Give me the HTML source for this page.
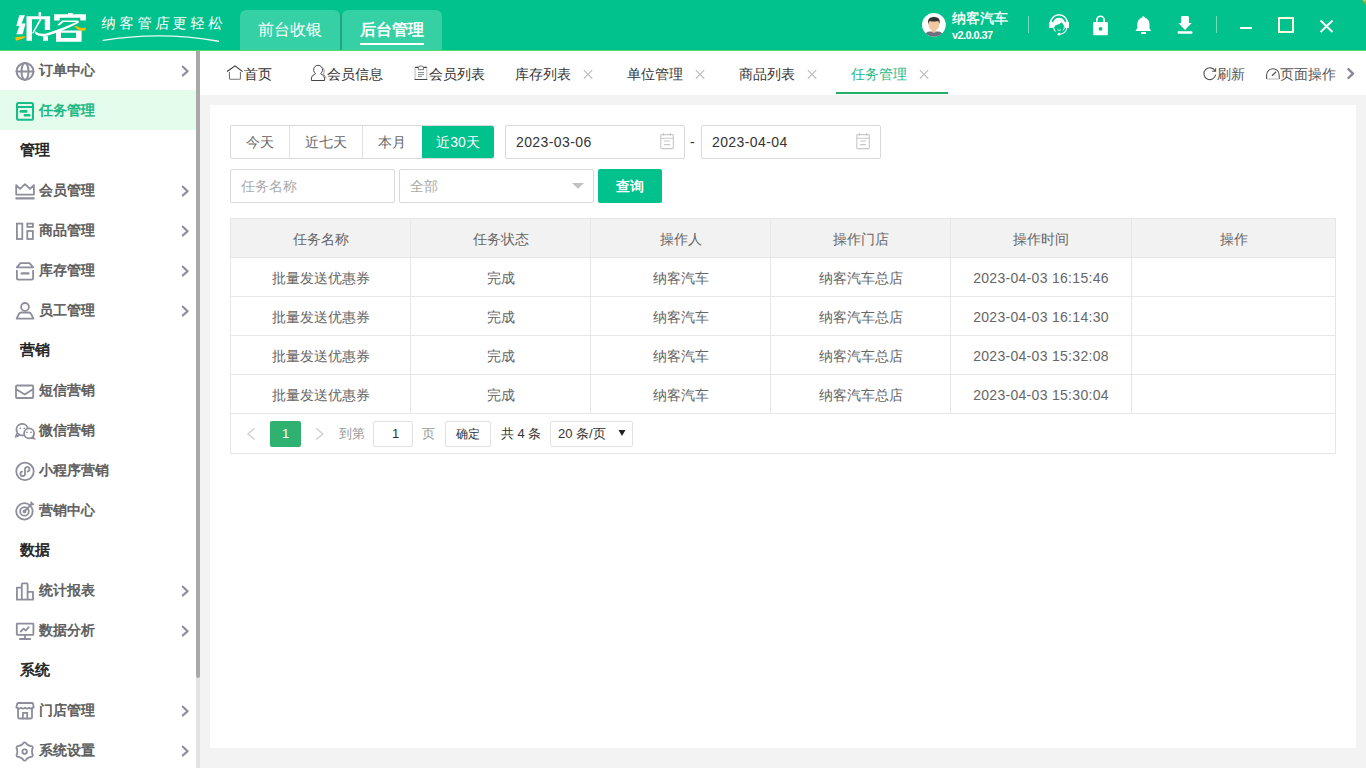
<!DOCTYPE html>
<html><head><meta charset="utf-8">
<style>
*{box-sizing:border-box;margin:0;padding:0}
html,body{width:1366px;height:768px;overflow:hidden;background:#f3f3f3;font-family:"Liberation Sans",sans-serif;color:#333}
.abs{position:absolute}
#hdr{position:absolute;left:0;top:0;width:1366px;height:50px;background:#01c18c}
#hdrline{position:absolute;left:0;top:50px;width:1366px;height:1px;background:#55dc66}
.htab{position:absolute;top:10px;height:40px;background:#35d0a4;border-radius:6px 6px 0 0;color:#fff;font-size:16px;line-height:40px;text-align:center}
#side{position:absolute;left:0;top:51px;width:196px;height:717px;background:#fff}
.si{position:absolute;left:0;width:196px;height:40px;font-size:14px;color:#5a5a5a;line-height:40px}
.si .t{-webkit-text-stroke:0.55px currentColor}
.si.sec .t{-webkit-text-stroke:0.6px currentColor}
.si .t{position:absolute;left:39px;top:0}
.si.sec .t{left:20px;color:#222;font-size:15px}
.si.act{background:#e4fcec;color:#16b782}
.si .ic{position:absolute;left:10px}
.si .chev{position:absolute;left:170px;top:5px;width:30px;height:30px}
#sb{position:absolute;left:196px;top:51px;width:4px;height:717px;background:#e3e3e3}
#sbt{position:absolute;left:196px;top:51px;width:4px;height:627px;background:#a9a9a9;border-radius:0 0 2px 2px}
#tabs{position:absolute;left:200px;top:51px;width:1166px;height:44px;background:#fff}
.tb{position:absolute;top:52px;height:44px;line-height:44px;white-space:nowrap;font-size:14px;color:#333}
.x{position:absolute;top:0;font-size:16px;color:#bbb}
.fb{position:absolute;top:125px;height:34px;line-height:34px;text-align:center;font-size:14px;color:#666}
.inp{position:absolute;border:1px solid #d9d9d9;border-radius:2px;background:#fff}
.dt{font-size:14px;line-height:35px;color:#333;letter-spacing:0.4px}
.ph{font-size:14px;line-height:34px;color:#aaa}
.cal{fill:none;stroke:#c8c8c8;stroke-width:1.1}
#tbl{position:absolute;left:230px;top:218px;width:1105px}
#tbl table{border-collapse:collapse;table-layout:fixed;width:1105px}
#tbl td{border:1px solid #e6e6e6;height:39px;text-align:center;font-size:14px;color:#666;padding:2px 0 0 0;white-space:nowrap;line-height:16px}
#tbl tr.th td{background:#f2f2f2}
.pg{top:421px;font-size:13px;line-height:26px}
#card{position:absolute;left:210px;top:105px;width:1146px;height:643px;background:#fff}
</style></head><body>
<div id="hdr"></div>
<div id="hdrline"></div>
<svg class="abs" style="left:0;top:0" width="240" height="50" viewBox="0 0 240 50">
<g fill="#fff">
<path d="M19.3 15.3H24.9L21.6 23.5H25.6L22.6 34.2H16.3L19.4 25.9H16.3Z"/>
<path d="M26.5 16.2H50.1V29.9H44.8V19.2H32V40.8H26.5Z"/>
<path d="M39.6 19.2H41.6L33.6 33.2H32Z"/>
<path d="M38.6 12.2H41.1V16.2H38.6Z"/>
<path d="M43 36.1H48V40.8H43Z"/>
<path d="M35 31.2Q40 35.2 47 33.2Q62 28.5 78.4 21.2L78.9 22.7Q63 31 48 35.6Q39 37.8 35 33.6Z"/>
<path d="M67.9 13.1H72.8V15.5H67.9Z"/>
<path d="M54.2 14.3H85.9V20.6H80.3V17.8H59.7V20.6H54.2Z"/>
<path d="M57.3 24.9L62 20.4H78.4V22H63.5L59.5 25.6Z"/>
<path d="M56 30.5H81.6V41.7H56ZM61 32.8V38.1H76V32.8Z" fill-rule="evenodd"/>
</g>
<g fill="#f6c000">
<path d="M15.3 37.3Q20 37 25.2 36.3L24.6 38Q20 39.8 15.8 40.8Z"/>
<path d="M74.1 26.2Q76.5 25.6 79.5 27.5Q83 28.6 85.9 27.2L85.5 30.2Q81 31.5 78 29.6Q76 28 74.1 26.2Z"/>
</g>
<text x="101" y="28.5" fill="#fff" font-size="14.3" font-family="Liberation Serif" letter-spacing="3.9" transform="skewX(-5) translate(2.5 0)">纳客管店更轻松</text>
<path d="M103.2 40.4Q160 31 218.5 41.2" fill="none" stroke="#fff" stroke-width="1.4" stroke-linecap="round" opacity="0.92"/>
</svg>

<div class="htab" style="left:240px;width:100px">前台收银</div>
<div class="abs" style="left:340px;top:14px;width:2px;height:36px;background:#1aa97d"></div>
<div class="htab" style="left:342px;width:100px;font-weight:bold">后台管理</div>
<div class="abs" style="left:360px;top:43px;width:64px;height:2px;background:#fff"></div>

<svg class="abs" style="left:920px;top:8px" width="40" height="34" viewBox="0 0 40 34">
<defs><clipPath id="avc"><circle cx="13.9" cy="16.8" r="11.9"/></clipPath></defs>
<circle cx="13.9" cy="16.8" r="11.9" fill="#fff"/>
<g clip-path="url(#avc)">
<path d="M3 30Q5 23.5 10 23.5H18Q23 23.5 25 30V34H3Z" fill="#6f6f82"/>
<path d="M11.8 20.5V24Q13.9 25.6 16 24V20.5Z" fill="#f2c299"/>
<ellipse cx="13.9" cy="16.2" rx="5.4" ry="6.3" fill="#f5c7a0"/>
<path d="M8 16.5Q7.2 9.5 12.2 9.2Q14 8.4 15.8 9.2Q20.6 9.5 19.8 16.5Q19.3 13.6 17.8 12.9Q14 14.3 10 12.9Q8.6 13.6 8 16.5Z" fill="#333"/>
</g></svg>
<div class="abs" style="left:952px;top:9px;font-size:14px;line-height:18px;color:#fff;white-space:nowrap;-webkit-text-stroke:0.35px #fff">纳客汽车</div>
<div class="abs" style="left:952px;top:29px;font-size:11px;line-height:13px;color:#fff;font-weight:bold;letter-spacing:-0.6px">v2.0.0.37</div>
<div class="abs" style="left:1028px;top:16px;width:1px;height:17px;background:rgba(255,255,255,0.45)"></div>
<svg class="abs" style="left:1044px;top:10px" width="30" height="30" viewBox="0 0 30 30">
<path d="M6.6 13.2A8.4 8.4 0 0 1 23.4 13.2" fill="none" stroke="#fff" stroke-width="1.5"/>
<rect x="5.1" y="11.7" width="3.9" height="6.3" rx="0.8" fill="#fff"/>
<rect x="21.1" y="11.7" width="3.9" height="6.3" rx="0.8" fill="#fff"/>
<path d="M9 14.5Q9.3 7.8 15 7.8Q20.8 7.8 21.1 14.5V17.6L20 15.8Q19.3 14 17.4 12.3Q16 14.3 13 14.8Q10.5 15.4 10.1 17.6L9 17.3Z" fill="#fff"/>
<path d="M9.6 17.2Q9.8 20 11.8 21.6" fill="none" stroke="#fff" stroke-width="1.1"/>
<path d="M20.4 16.5Q20.3 19 19 20.5" fill="none" stroke="#fff" stroke-width="1"/>
<path d="M13.4 19.9Q15.2 20.5 17 19.9" fill="none" stroke="#fff" stroke-width="0.8"/>
<path d="M22.6 18Q22 23.6 15.6 24.2" fill="none" stroke="#fff" stroke-width="1.1"/>
<circle cx="15" cy="24.2" r="1.4" fill="#fff"/>
</svg>
<svg class="abs" style="left:1088px;top:10px" width="30" height="30" viewBox="0 0 30 30">
<path d="M8.8 12.5V10A3.7 3.7 0 0 1 16.2 10V12.5" fill="none" stroke="#fff" stroke-width="1.6"/>
<rect x="5.1" y="12.1" width="14.8" height="13.1" rx="1" fill="#fff"/>
<circle cx="12.5" cy="18.8" r="1.9" fill="#01c18c"/>
</svg>
<svg class="abs" style="left:1128px;top:10px" width="30" height="30" viewBox="0 0 30 30">
<path d="M15.4 5.9Q16.4 5.9 16.7 7.6Q21.4 9 21.5 14.5V18.2L22.9 20.4Q23 21 22.3 21H8.3Q7.6 21 7.7 20.4L9.3 18.2V14.5Q9.4 9 14.1 7.6Q14.4 5.9 15.4 5.9Z" fill="#fff"/>
<rect x="13.1" y="22" width="4.9" height="1.9" rx="0.5" fill="#fff"/>
</svg>
<svg class="abs" style="left:1170px;top:10px" width="30" height="30" viewBox="0 0 30 30">
<path d="M11.1 12.9V7Q11.1 5.9 12.2 5.9H17.8Q18.9 5.9 18.9 7V12.9H21.7L15 20.1L8.4 12.9Z" fill="#fff"/>
<rect x="7.6" y="21.3" width="14.9" height="2.5" rx="1" fill="#fff"/>
</svg>
<div class="abs" style="left:1216px;top:16px;width:1px;height:17px;background:rgba(255,255,255,0.45)"></div>
<div class="abs" style="left:1240px;top:27px;width:12px;height:2px;background:#fff"></div>
<div class="abs" style="left:1278px;top:17px;width:16px;height:16px;border:2px solid #fdfde0"></div>
<svg class="abs" style="left:1318px;top:18px" width="17" height="17" viewBox="0 0 17 17"><path d="M2.6 2.5L14.5 14M14.5 2.5L2.6 14" stroke="#fff" stroke-width="1.9"/></svg>

<div id="side"></div>
<div class="si" style="top:50px"><svg class="ic" style="top:5px" width="30" height="30" viewBox="0 0 30 30" fill="none" stroke="#8d8d9b" stroke-width="2" stroke-linecap="round"><circle cx="15" cy="16.4" r="8.4"/><ellipse cx="15" cy="16.4" rx="3.5" ry="8.5"/><path d="M6.5 16.4H23.5"/></svg><span class="t">订单中心</span><svg class="chev" width="30" height="30" viewBox="0 0 30 30"><path d="M12.9 11.7L17.6 16.2L12.9 20.4" fill="none" stroke="#8d8d9b" stroke-width="2.2" stroke-linecap="round" stroke-linejoin="round"/></svg></div>
<div class="si act" style="top:90px"><svg class="ic" style="top:5px" width="30" height="30" viewBox="0 0 30 30" fill="none" stroke="#15bd88" stroke-width="2" stroke-linecap="round"><rect x="7" y="8" width="16" height="16.8" rx="1.6"/><path d="M6.9 11.9H23.1"/><path d="M10.8 16.4H16.3M14.9 20.3H19.3" stroke-width="2.6"/></svg><span class="t">任务管理</span></div>
<div class="si sec" style="top:130px"><span class="t">管理</span></div>
<div class="si" style="top:170px"><svg class="ic" style="top:8px" width="30" height="30" viewBox="0 0 30 30" fill="none" stroke="#8d8d9b" stroke-width="1.8" stroke-linecap="round"><path d="M6.2 16.6V7.1L10 10.9L15 6.2L20 10.9L23.9 7.1V16.6Z" stroke-linejoin="round"/><path d="M6.3 20.3H23.8" stroke-width="2.2"/></svg><span class="t">会员管理</span><svg class="chev" width="30" height="30" viewBox="0 0 30 30"><path d="M12.9 11.7L17.6 16.2L12.9 20.4" fill="none" stroke="#8d8d9b" stroke-width="2.2" stroke-linecap="round" stroke-linejoin="round"/></svg></div>
<div class="si" style="top:210px"><svg class="ic" style="top:8px" width="30" height="30" viewBox="0 0 30 30" fill="none" stroke="#8d8d9b" stroke-width="1.8" stroke-linecap="round"><rect x="6.9" y="5.6" width="5.4" height="15.4"/><rect x="17.3" y="5.6" width="5.6" height="3.3"/><rect x="17.3" y="13" width="5.6" height="8"/></svg><span class="t">商品管理</span><svg class="chev" width="30" height="30" viewBox="0 0 30 30"><path d="M12.9 11.7L17.6 16.2L12.9 20.4" fill="none" stroke="#8d8d9b" stroke-width="2.2" stroke-linecap="round" stroke-linejoin="round"/></svg></div>
<div class="si" style="top:250px"><svg class="ic" style="top:8px" width="30" height="30" viewBox="0 0 30 30" fill="none" stroke="#8d8d9b" stroke-width="1.8" stroke-linecap="round"><path d="M6.8 9.3L10.4 5.2H19.5L23.2 9.3Z" stroke-linejoin="round"/><path d="M6.9 12.6V20Q6.9 21.6 8.5 21.6H21.5Q23.1 21.6 23.1 20V12.6"/><path d="M11.8 15.4H18.3" stroke-width="2.4"/></svg><span class="t">库存管理</span><svg class="chev" width="30" height="30" viewBox="0 0 30 30"><path d="M12.9 11.7L17.6 16.2L12.9 20.4" fill="none" stroke="#8d8d9b" stroke-width="2.2" stroke-linecap="round" stroke-linejoin="round"/></svg></div>
<div class="si" style="top:290px"><svg class="ic" style="top:8px" width="30" height="30" viewBox="0 0 30 30" fill="none" stroke="#8d8d9b" stroke-width="1.8" stroke-linecap="round"><circle cx="15" cy="8.9" r="3.9"/><path d="M6.6 20.6L8.8 16.1Q9.6 14.5 11.4 14.5H18.6Q20.4 14.5 21.2 16.1L23.4 20.6Z" stroke-linejoin="round"/></svg><span class="t">员工管理</span><svg class="chev" width="30" height="30" viewBox="0 0 30 30"><path d="M12.9 11.7L17.6 16.2L12.9 20.4" fill="none" stroke="#8d8d9b" stroke-width="2.2" stroke-linecap="round" stroke-linejoin="round"/></svg></div>
<div class="si sec" style="top:330px"><span class="t">营销</span></div>
<div class="si" style="top:370px"><svg class="ic" style="top:5px" width="30" height="30" viewBox="0 0 30 30" fill="none" stroke="#8d8d9b" stroke-width="1.8" stroke-linecap="round"><rect x="6" y="10.5" width="17.2" height="12.5" rx="1"/><path d="M6.3 14.3L14.7 19.4L23 14.3" stroke-linejoin="round"/></svg><span class="t">短信营销</span></div>
<div class="si" style="top:410px"><svg class="ic" style="top:5px" width="30" height="30" viewBox="0 0 30 30" fill="none" stroke="#8d8d9b" stroke-width="1.8" stroke-linecap="round"><path d="M13.2 20.3A5.7 5.7 0 1 1 17.6 12.8"/><path d="M6.6 19.2L6 21.5L8.6 20.6"/><circle cx="19.1" cy="18.4" r="5"/><path d="M22.8 21.8L24 23.6L21.8 23.2"/><path d="M10.2 13.3h0.3M14.1 13.3h0.3M16.8 17.2h0.4M20.7 17.2h0.4" stroke-width="1.6" stroke-linecap="round"/></svg><span class="t">微信营销</span></div>
<div class="si" style="top:450px"><svg class="ic" style="top:5px" width="30" height="30" viewBox="0 0 30 30" fill="none" stroke="#8d8d9b" stroke-width="1.8" stroke-linecap="round"><circle cx="15" cy="16.4" r="8.7"/><path d="M12.1 16.6A2.3 2.3 0 1 0 15 18.6V14.9A2.3 2.3 0 1 1 17.7 16.5"/></svg><span class="t">小程序营销</span></div>
<div class="si" style="top:490px"><svg class="ic" style="top:5px" width="30" height="30" viewBox="0 0 30 30" fill="none" stroke="#8d8d9b" stroke-width="1.8" stroke-linecap="round"><circle cx="14.45" cy="16.4" r="8.2"/><circle cx="14.45" cy="16.4" r="4.3"/><path d="M14.3 16.5L21.6 9"/><circle cx="14.45" cy="16.4" r="1"/><path d="M21.4 7.6V9.3H23.1" stroke-width="2"/></svg><span class="t">营销中心</span></div>
<div class="si sec" style="top:530px"><span class="t">数据</span></div>
<div class="si" style="top:570px"><svg class="ic" style="top:5px" width="30" height="30" viewBox="0 0 30 30" fill="none" stroke="#8d8d9b" stroke-width="1.8" stroke-linecap="round"><path d="M6.9 24.7V12.6H11.8V24.7ZM11.8 12V9.1Q11.8 8.3 12.6 8.3H16.8Q17.6 8.3 17.6 9.1V24.7M17.6 16.9H23V24.7H11.8" stroke-linejoin="round"/></svg><span class="t">统计报表</span><svg class="chev" width="30" height="30" viewBox="0 0 30 30"><path d="M12.9 11.7L17.6 16.2L12.9 20.4" fill="none" stroke="#8d8d9b" stroke-width="2.2" stroke-linecap="round" stroke-linejoin="round"/></svg></div>
<div class="si" style="top:610px"><svg class="ic" style="top:5px" width="30" height="30" viewBox="0 0 30 30" fill="none" stroke="#8d8d9b" stroke-width="1.8" stroke-linecap="round"><rect x="6.8" y="8.7" width="16.6" height="11.1" rx="0.5"/><path d="M15 19.8V23.6M9.9 24H20.2"/><path d="M10.8 16.5L13.7 13.6L15.8 15.5L18.7 12.1" stroke-linejoin="round"/></svg><span class="t">数据分析</span><svg class="chev" width="30" height="30" viewBox="0 0 30 30"><path d="M12.9 11.7L17.6 16.2L12.9 20.4" fill="none" stroke="#8d8d9b" stroke-width="2.2" stroke-linecap="round" stroke-linejoin="round"/></svg></div>
<div class="si sec" style="top:650px"><span class="t">系统</span></div>
<div class="si" style="top:690px"><svg class="ic" style="top:5px" width="30" height="30" viewBox="0 0 30 30" fill="none" stroke="#8d8d9b" stroke-width="1.8" stroke-linecap="round"><path d="M7.3 8.5Q7.5 8 8.5 8H22Q22.8 8 23 8.6L23.7 12.3Q23.4 13 22.5 12.6Q21 14.6 19 12.6Q17.1 14.6 15 12.6Q13 14.6 11 12.6Q9 14.6 7.4 12.6Q6.3 13 6.4 12.2Z" stroke-linejoin="round"/><path d="M8.1 13.5V22.6Q8.1 23.5 9 23.5H21.1Q22 23.5 22 22.6V13.5"/><path d="M12.9 23.5V17.8H17.2V23.5"/></svg><span class="t">门店管理</span><svg class="chev" width="30" height="30" viewBox="0 0 30 30"><path d="M12.9 11.7L17.6 16.2L12.9 20.4" fill="none" stroke="#8d8d9b" stroke-width="2.2" stroke-linecap="round" stroke-linejoin="round"/></svg></div>
<div class="si" style="top:730px"><svg class="ic" style="top:5px" width="30" height="30" viewBox="0 0 30 30" fill="none" stroke="#8d8d9b" stroke-width="1.8" stroke-linecap="round"><path d="M12.99 8.67A1.7 1.7 0 0 1 16.31 8.67L18.30 10.18L20.60 11.15A1.7 1.7 0 0 1 22.26 14.03L21.95 16.50L22.26 18.97A1.7 1.7 0 0 1 20.60 21.85L18.30 22.82L16.31 24.33A1.7 1.7 0 0 1 12.99 24.33L11.00 22.82L8.70 21.85A1.7 1.7 0 0 1 7.04 18.97L7.35 16.50L7.04 14.03A1.7 1.7 0 0 1 8.70 11.15L11.00 10.18Z" stroke-linejoin="round"/><circle cx="14.65" cy="16.6" r="2.3"/></svg><span class="t">系统设置</span><svg class="chev" width="30" height="30" viewBox="0 0 30 30"><path d="M12.9 11.7L17.6 16.2L12.9 20.4" fill="none" stroke="#8d8d9b" stroke-width="2.2" stroke-linecap="round" stroke-linejoin="round"/></svg></div>
<div id="sb"></div><div id="sbt"></div>
<div id="tabs"></div>
<svg class="abs" style="left:222px;top:58px" width="26" height="26" viewBox="0 0 26 26" fill="none" stroke-width="1.1">
<path d="M5.1 13.5L13 7.9L20.6 13.6" stroke="#333"/>
<path d="M7.45 13.9V20.3Q7.45 21.3 8.45 21.3H17.45Q18.45 21.3 18.45 20.3V13.9" stroke="#777"/>
</svg>
<div class="tb" style="left:244px">首页</div>
<svg class="abs" style="left:306px;top:58px" width="26" height="26" viewBox="0 0 26 26" fill="none" stroke="#555" stroke-width="1">
<path d="M9.65 15.6A4.5 4.5 0 1 1 14.55 15.6Q18.6 17.6 18.6 20V22.5H5.4V20Q5.4 17.6 9.65 15.6Z" stroke="#444"/>
<path d="M15.5 9.2A4.3 4.3 0 0 1 17.4 15.9L20.3 20.3" stroke="#999"/>
</svg>
<div class="tb" style="left:327px">会员信息</div>
<svg class="abs" style="left:408px;top:58px" width="26" height="26" viewBox="0 0 26 26" fill="none" stroke-width="1">
<path d="M7.1 9.3V21.5M18.8 9.3V21.5" stroke="#bbb"/>
<path d="M7.1 9.3H10.6M15.3 9.3H18.8M6.6 21.5H19.3" stroke="#444" stroke-width="1.2"/>
<path d="M10.6 9.3L10.2 11.7H15.7L15.3 9.3L14.6 8.1H11.3Z" stroke="#666" stroke-width="0.9"/>
<path d="M10 14.55H16.1M10 16.6H16.1M10 18.45H13.9" stroke="#888"/>
</svg>
<div class="tb" style="left:429px">会员列表</div>
<div class="tb" style="left:515px">库存列表</div>
<div class="tb" style="left:627px">单位管理</div>
<div class="tb" style="left:739px">商品列表</div>
<div class="tb" style="left:851px;color:#1fb886">任务管理</div>
<svg class="abs" style="left:575px;top:60px" width="26" height="26" viewBox="0 0 26 26"><path d="M8.8 10.15L17.3 18.45M17.3 10.15L8.8 18.45" stroke="#bdbdbd" stroke-width="1.2"/></svg>
<svg class="abs" style="left:687px;top:60px" width="26" height="26" viewBox="0 0 26 26"><path d="M8.8 10.15L17.3 18.45M17.3 10.15L8.8 18.45" stroke="#bdbdbd" stroke-width="1.2"/></svg>
<svg class="abs" style="left:799px;top:60px" width="26" height="26" viewBox="0 0 26 26"><path d="M8.8 10.15L17.3 18.45M17.3 10.15L8.8 18.45" stroke="#bdbdbd" stroke-width="1.2"/></svg>
<svg class="abs" style="left:911px;top:60px" width="26" height="26" viewBox="0 0 26 26"><path d="M8.8 10.15L17.3 18.45M17.3 10.15L8.8 18.45" stroke="#bdbdbd" stroke-width="1.2"/></svg>
<div class="abs" style="left:836px;top:92px;width:112px;height:2px;background:#22b066"></div>
<svg class="abs" style="left:1198px;top:60px" width="26" height="26" viewBox="0 0 26 26" fill="none" stroke="#555" stroke-width="1.1">
<path d="M17.2 11.2A5.9 5.9 0 1 0 17.7 14.5"/>
<path d="M17.6 8.2V11.3H14.2"/>
</svg>
<div class="tb" style="left:1217px;color:#555">刷新</div>
<svg class="abs" style="left:1260px;top:60px" width="26" height="26" viewBox="0 0 26 26" fill="none" stroke-width="1.1">
<path d="M6.6 19V15A6.3 6.3 0 0 1 19.2 15V19" stroke="#555"/>
<path d="M7 19H18.8" stroke="#c8c8c8" stroke-width="1.3"/>
<path d="M12.3 15.4L15.7 12.3" stroke="#555" stroke-width="1.3" stroke-linecap="round"/>
</svg>
<div class="tb" style="left:1280px;color:#555">页面操作</div>
<svg class="abs" style="left:1340px;top:60px" width="20" height="26" viewBox="0 0 20 26"><path d="M8.4 9.2L13 13.6L8.4 18" fill="none" stroke="#85859a" stroke-width="2.3" stroke-linecap="round" stroke-linejoin="round"/></svg>

<div id="card"></div>
<div class="abs" style="left:230px;top:125px;width:264px;height:34px;border:1px solid #d9d9d9;border-radius:2px;background:#fff"></div>
<div class="abs" style="left:289px;top:126px;width:1px;height:32px;background:#e2e2e2"></div>
<div class="abs" style="left:362px;top:126px;width:1px;height:32px;background:#e2e2e2"></div>
<div class="abs" style="left:422px;top:126px;width:72px;height:32px;background:#01c18c;border-radius:0 2px 2px 0"></div>
<div class="fb" style="left:230px;width:60px">今天</div>
<div class="fb" style="left:290px;width:72px">近七天</div>
<div class="fb" style="left:362px;width:60px">本月</div>
<div class="fb" style="left:422px;width:72px;color:#fff">近30天</div>

<div class="inp" style="left:505px;top:125px;width:180px;height:34px"></div>
<div class="abs dt" style="left:516px;top:125px">2023-03-06</div>
<div class="abs" style="left:690px;top:125px;line-height:34px;font-size:14px;color:#333">-</div>
<div class="inp" style="left:701px;top:125px;width:180px;height:34px"></div>
<div class="abs dt" style="left:712px;top:125px">2023-04-04</div>
<svg class="abs cal" style="left:650px;top:125px" width="30" height="35" viewBox="0 0 30 35"><rect x="10.8" y="9.6" width="12.5" height="14" rx="0.8"/><path d="M10.8 13.2H23.3M13.5 8V10.5M20.5 8V10.5M14 16H20M14 19.6H20"/></svg>
<svg class="abs cal" style="left:846px;top:125px" width="30" height="35" viewBox="0 0 30 35"><rect x="10.8" y="9.6" width="12.5" height="14" rx="0.8"/><path d="M10.8 13.2H23.3M13.5 8V10.5M20.5 8V10.5M14 16H20M14 19.6H20"/></svg>

<div class="inp" style="left:230px;top:169px;width:165px;height:34px"></div>
<div class="abs ph" style="left:241px;top:169px">任务名称</div>
<div class="inp" style="left:399px;top:169px;width:195px;height:34px"></div>
<div class="abs ph" style="left:410px;top:169px">全部</div>
<svg class="abs" style="left:570px;top:180px" width="16" height="10" viewBox="0 0 16 10"><path d="M2 3H14L8 8.7Z" fill="#c2c2c2"/></svg>
<div class="abs" style="left:598px;top:169px;width:64px;height:34px;background:#01c18c;border-radius:2px;color:#fff;font-size:14px;font-weight:bold;line-height:34px;text-align:center">查询</div>

<div id="tbl">
<table>
<colgroup><col style="width:180px"><col style="width:180px"><col style="width:180px"><col style="width:180px"><col style="width:181px"><col style="width:204px"></colgroup>
<tr class="th"><td>任务名称</td><td>任务状态</td><td>操作人</td><td>操作门店</td><td>操作时间</td><td>操作</td></tr>
<tr><td>批量发送优惠券</td><td>完成</td><td>纳客汽车</td><td>纳客汽车总店</td><td style="letter-spacing:0.3px">2023-04-03 16:15:46</td><td></td></tr>
<tr><td>批量发送优惠券</td><td>完成</td><td>纳客汽车</td><td>纳客汽车总店</td><td style="letter-spacing:0.3px">2023-04-03 16:14:30</td><td></td></tr>
<tr><td>批量发送优惠券</td><td>完成</td><td>纳客汽车</td><td>纳客汽车总店</td><td style="letter-spacing:0.3px">2023-04-03 15:32:08</td><td></td></tr>
<tr><td>批量发送优惠券</td><td>完成</td><td>纳客汽车</td><td>纳客汽车总店</td><td style="letter-spacing:0.3px">2023-04-03 15:30:04</td><td></td></tr>
</table>
</div>
<div class="abs" style="left:230px;top:413px;width:1106px;height:41px;border:1px solid #e6e6e6;border-top:none"></div>
<svg class="abs" style="left:240px;top:420px" width="22" height="26" viewBox="0 0 22 26"><path d="M14.6 8.3L7.9 14L14.6 19.6" fill="none" stroke="#cfcfcf" stroke-width="1.3"/></svg>
<div class="abs" style="left:270px;top:421px;width:31px;height:26px;background:#2fb26f;border-radius:2px;color:#fff;font-size:13px;line-height:26px;text-align:center">1</div>
<svg class="abs" style="left:308px;top:420px" width="22" height="26" viewBox="0 0 22 26"><path d="M8.2 8.3L14.9 14L8.2 19.6" fill="none" stroke="#cfcfcf" stroke-width="1.3"/></svg>
<div class="abs pg" style="left:339px;color:#999">到第</div>
<div class="abs" style="left:373px;top:421px;width:40px;height:26px;border:1px solid #e2e2e2;border-radius:2px;font-size:13px;line-height:24px;text-align:center;color:#333;padding-left:5px">1</div>
<div class="abs pg" style="left:422px;color:#999">页</div>
<div class="abs" style="left:445px;top:421px;width:46px;height:26px;border:1px solid #e2e2e2;border-radius:2px;font-size:12px;line-height:24px;text-align:center;color:#333">确定</div>
<div class="abs pg" style="left:501px;color:#333">共 4 条</div>
<div class="abs" style="left:550px;top:421px;width:83px;height:26px;border:1px solid #e2e2e2;border-radius:2px;font-size:13px;line-height:24px;color:#333;padding-left:7px">20 条/页</div>
<svg class="abs" style="left:616px;top:428px" width="12" height="10" viewBox="0 0 12 10"><path d="M2.5 2H9.5L6 8Z" fill="#222"/></svg>

<svg class="abs" style="left:1360px;top:0" width="6" height="6" viewBox="0 0 6 6"><path d="M2 0H6V5Q4.5 4.5 4 2.5Q3 1.5 2 0Z" fill="#8fae2a"/><path d="M3 0H5L5.5 1.5Q4 1 3 0Z" fill="#cbd59a"/></svg>
</body></html>
